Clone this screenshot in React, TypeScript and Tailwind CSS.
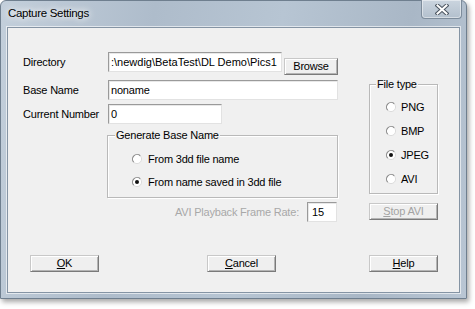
import React from "react";

function Radio({ checked }: { checked?: boolean }) {
  return (
    <svg width="12" height="12" viewBox="0 0 12 12" className="shrink-0">
      <circle cx="6" cy="6" r="4.6" fill="#ffffff" stroke="#dcdcdc" strokeWidth="1" />
      <path d="M2.75 9.25 A4.6 4.6 0 0 1 9.25 2.75" fill="none" stroke="#8c8c8c" strokeWidth="1.1" />
      {checked && <circle cx="6" cy="6" r="2" fill="#111111" />}
    </svg>
  );
}

function Btn({ children, w, disabled }: { children: React.ReactNode; w: string; disabled?: boolean }) {
  return (
    <div
      className={`${w} h-[17px] flex items-center justify-center border border-t-[#c8c8c8] border-l-[#c8c8c8] border-r-[#7a7a7a] border-b-[#7a7a7a] bg-[#efefef] shadow-[inset_1px_1px_0_#ffffff,inset_-1px_-1px_0_#b4b4b4] ${
        disabled ? "text-[#a3a3a3]" : "text-black"
      }`}
    >
      {children}
    </div>
  );
}

function Input({ w, value, className = "" }: { w: string; value: string; className?: string }) {
  return (
    <div
      className={`${w} h-[20px] flex items-center pl-[2px] overflow-hidden whitespace-nowrap bg-white border border-t-[#9a9a9a] border-l-[#9a9a9a] border-r-[#e2e2e2] border-b-[#e2e2e2] shadow-[inset_1px_1px_0_#e8e8e8] ${className}`}
    >
      {value}
    </div>
  );
}

export default function App() {
  return (
    <div className="w-[475px] h-[309px] bg-white font-['Liberation_Sans',Arial,sans-serif] text-[11px] tracking-[-0.2px] text-black leading-none">
      <div className="relative w-[467px] h-[299px] rounded-t-[6px] border border-[#6f7f8f] bg-[linear-gradient(100deg,#c3cfdb_0%,#aebccb_30%,#b7c5d3_55%,#a9b7c6_80%,#b9c6d4_100%)] shadow-[2px_3px_5px_rgba(0,0,0,0.35)] flex flex-col pl-[6px] pr-[6px] pb-[5px]">
        {/* title bar */}
        <div className="h-[26px] flex items-center justify-between">
          <span className="pl-[1px] text-[11.5px] tracking-[-0.3px] [text-shadow:0_0_6px_#ffffff,0_0_10px_#ffffff]">
            Capture Settings
          </span>
          <div className="self-start mt-[-1px] mr-[-2px] w-[41px] h-[19px] rounded-b-[4px] border border-[#7d8c9b] border-t-0 bg-[linear-gradient(#cbd5df,#b3c0cd)] shadow-[inset_0_0_0_1px_rgba(255,255,255,0.45)] flex items-center justify-center">
            <svg width="14" height="11" viewBox="0 0 14 11">
              <path d="M2.5 1.5 L11.5 9.5 M11.5 1.5 L2.5 9.5" stroke="#4b5560" strokeWidth="4" strokeLinecap="square" />
              <path d="M2.5 1.5 L11.5 9.5 M11.5 1.5 L2.5 9.5" stroke="#ffffff" strokeWidth="2" strokeLinecap="square" />
            </svg>
          </div>
        </div>

        {/* client area */}
        <div className="flex-1 bg-[#f0f0f0] border border-[#8594a4] shadow-[0_0_0_1px_rgba(255,255,255,0.6)] flex flex-col pt-[24px]">
          <div className="flex">
            {/* left part */}
            <div className="ml-[15px] w-[315px] flex flex-col">
              <div className="flex items-start">
                <div className="w-[85px] h-[20px] flex items-center">Directory</div>
                <Input w="w-[174px]" value=":\newdig\BetaTest\DL Demo\Pics1" className="tracking-[0px]" />
                <div className="ml-[2px] mt-[6px]">
                  <Btn w="w-[54px]">Browse</Btn>
                </div>
              </div>
              <div className="flex items-start mt-[5px]">
                <div className="w-[85px] h-[20px] flex items-center">Base Name</div>
                <Input w="w-[230px]" value="noname" />
              </div>
              <div className="flex items-start mt-[4px]">
                <div className="w-[85px] h-[20px] flex items-center">Current Number</div>
                <Input w="w-[114px]" value="0" />
              </div>

              <div className="relative mt-[11px] ml-[84px] w-[231px] h-[63px] border border-[#b9b9b9] shadow-[inset_1px_1px_0_#ffffff,1px_1px_0_#ffffff] flex flex-col pt-[16px] pl-[23px] gap-[9px]">
                <span className="absolute left-[7px] top-[-6px] bg-[#f0f0f0] px-[1px]">Generate Base Name</span>
                <div className="flex items-center h-[14px] gap-[5px]">
                  <Radio />
                  <span>From 3dd file name</span>
                </div>
                <div className="flex items-center h-[14px] gap-[5px]">
                  <Radio checked />
                  <span>From name saved in 3dd file</span>
                </div>
              </div>

              <div className="flex items-center justify-end mt-[4px] pr-[1px]">
                <span className="text-[#a8a8a8] mr-[8px]">AVI Playback Frame Rate:</span>
                <Input w="w-[30px]" value="15" className="bg-[#fbfbfb] pl-[4px]" />
              </div>
            </div>

            {/* right part */}
            <div className="ml-[31px] mt-[32px] w-[69px] flex flex-col">
              <div className="relative h-[110px] border border-[#b9b9b9] shadow-[inset_1px_1px_0_#ffffff,1px_1px_0_#ffffff] flex flex-col pt-[15px] pl-[15px] gap-[10px]">
                <span className="absolute left-[6px] top-[-6px] bg-[#f0f0f0] px-[1px]">File type</span>
                <div className="flex items-center h-[14px] gap-[4px]">
                  <Radio />
                  <span>PNG</span>
                </div>
                <div className="flex items-center h-[14px] gap-[4px]">
                  <Radio />
                  <span>BMP</span>
                </div>
                <div className="flex items-center h-[14px] gap-[4px]">
                  <Radio checked />
                  <span>JPEG</span>
                </div>
                <div className="flex items-center h-[14px] gap-[4px]">
                  <Radio />
                  <span>AVI</span>
                </div>
              </div>
              <div className="mt-[9px]">
                <Btn w="w-[69px]" disabled>
                  <span>
                    <span className="underline underline-offset-[1px]">S</span>top AVI
                  </span>
                </Btn>
              </div>
            </div>
          </div>

          {/* bottom buttons */}
          <div className="flex mt-[33px]">
            <div className="ml-[22px]">
              <Btn w="w-[69px]">
                <span>
                  <span className="underline underline-offset-[1px]">O</span>K
                </span>
              </Btn>
            </div>
            <div className="ml-[108px]">
              <Btn w="w-[69px]">
                <span>
                  <span className="underline underline-offset-[1px]">C</span>ancel
                </span>
              </Btn>
            </div>
            <div className="ml-[93px]">
              <Btn w="w-[69px]">
                <span>
                  <span className="underline underline-offset-[1px]">H</span>elp
                </span>
              </Btn>
            </div>
          </div>
        </div>
      </div>
    </div>
  );
}
